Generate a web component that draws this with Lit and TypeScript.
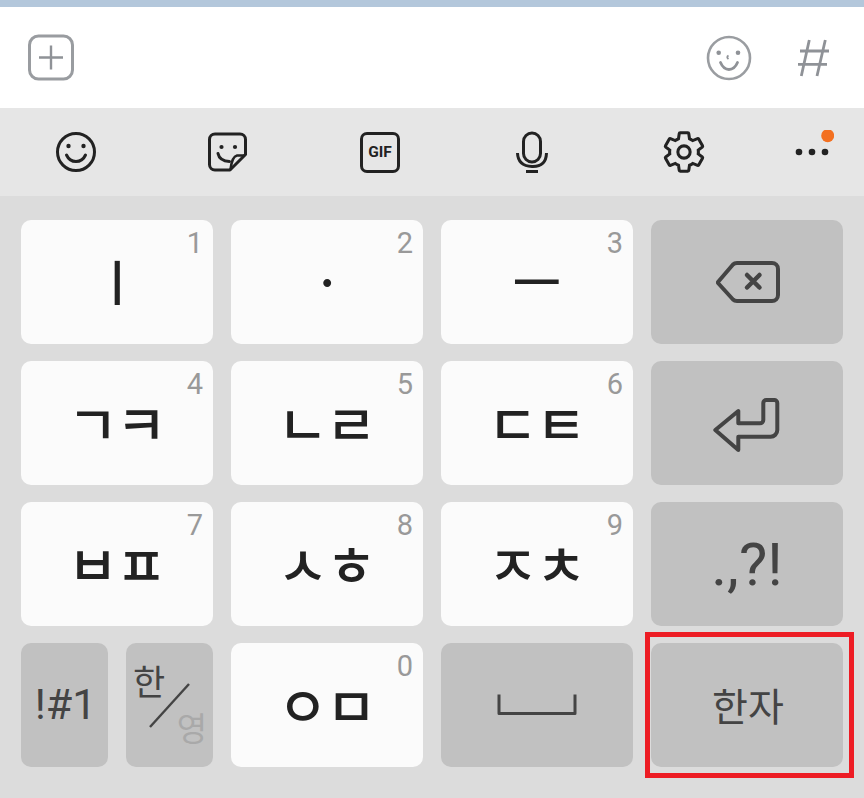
import { LitElement, html, css } from "lit";
import { customElement } from "lit/decorators.js";

const charKeys: Record<string, [string, string]> = {
  a: ["ㅣ", "1"],
  b: ["ㆍ", "2"],
  c: ["ㅡ", "3"],
  d: ["ㄱㅋ", "4"],
  e: ["ㄴㄹ", "5"],
  f: ["ㄷㅌ", "6"],
  g: ["ㅂㅍ", "7"],
  h: ["ㅅㅎ", "8"],
  i: ["ㅈㅊ", "9"],
  j: ["ㅇㅁ", "0"],
};

@customElement("app-root")
export class AppRoot extends LitElement {
  static styles = css`
    :host {
      display: block;
      width: 864px;
      height: 798px;
      position: relative;
      overflow: hidden;
      background: #dcdcdc;
      font-family: "Noto Sans CJK KR", Roboto, sans-serif;
    }
    svg { display: block; fill: none; }
    .band { height: 7px; background: #b3c7db; }
    .input {
      height: 101px;
      background: #fff;
      display: flex;
      align-items: center;
      padding: 0 33px 0 26px;
      box-sizing: border-box;
    }
    .spacer { flex: 1; }
    .input-right { display: flex; align-items: center; gap: 45px; }
    .toolbar {
      height: 88px;
      background: #e6e6e6;
      display: flex;
      align-items: center;
    }
    .slot {
      width: 152px;
      display: flex;
      justify-content: center;
      align-items: center;
    }
    .slot.last { flex: 1; width: auto; }
    .gif-box {
      width: 34px;
      height: 35px;
      border: 3px solid #222;
      border-radius: 7px;
      display: flex;
      align-items: center;
      justify-content: center;
      font: 700 15.5px Roboto, sans-serif;
      color: #222;
    }
    .keys {
      display: grid;
      grid-template-columns: repeat(4, 192px);
      grid-auto-rows: 124px;
      column-gap: 18px;
      row-gap: 17px;
      padding: 24px 0 0 21px;
    }
    .split { display: grid; grid-template-columns: 87px 87px; column-gap: 18px; }
    .key {
      position: relative;
      border-radius: 10px;
      display: flex;
      align-items: center;
      justify-content: center;
    }
    .light { background: #fbfbfb; color: #222; }
    .dark { background: #c1c1c1; color: #444; }
    .num {
      position: absolute;
      top: 6px;
      right: 10px;
      font: 400 29px/34px Roboto, sans-serif;
      color: #999;
    }
    .glyph {
      font-size: 55px;
      line-height: 60px;
      font-weight: 500;
      letter-spacing: -2px;
      transform: translate(-1px, -2px);
    }
    .glyph.single { font-size: 53px; letter-spacing: 0; transform: translateY(-2px); }
    .glyph.thin { font-size: 49px; letter-spacing: 0; transform: translateY(-2px); }
    .latin { font-family: Roboto, sans-serif; }
    .sym { font-size: 43px; transform: translate(1px, -1px); }
    .punct { font-size: 60px; transform: translateY(0); }
    .hanja { font-size: 39px; line-height: 50px; transform: translate(1px, -1px); }
    .lang {
      display: grid;
      padding: 0 6px 0 6px;
      align-content: center;
      justify-content: stretch;
    }
    .lang span { line-height: 46px; }
    .ko { font-size: 35px; justify-self: start; transform: translate(1px, -2px); }
    .en { font-size: 33px; justify-self: end; color: #a9a9a9; transform: translateY(-1px); }
    .slash { position: absolute; left: 0; top: 0; }
    .mark {
      position: absolute;
      left: 645px;
      top: 632px;
      width: 209px;
      height: 146px;
      box-sizing: border-box;
      border: 5px solid #ed1c24;
    }
  `;

  private key(id: string) {
    const [label, num] = charKeys[id];
    const extra = id === "a" ? "thin" : label.length === 1 ? "single" : "";
    return html`<div class="key light">
      <span class="glyph ${extra}">${label}</span><span class="num">${num}</span>
    </div>`;
  }

  private plusIcon() {
    return html`<svg width="50" height="50" viewBox="0 0 50 50">
      <rect x="3.5" y="3" width="43" height="43" rx="9" stroke="#999ca0" stroke-width="3"></rect>
      <path d="M25 12.500v24M13 24.500h24" stroke="#8f9297" stroke-width="2.4"></path>
    </svg>`;
  }

  private faceIcon() {
    return html`<svg width="46" height="46" viewBox="0 0 46 46">
      <circle cx="23" cy="23" r="21" stroke="#9a9da1" stroke-width="2.6"></circle>
      <circle cx="12.7" cy="17.7" r="2.3" fill="#8f9297"></circle>
      <circle cx="32" cy="17.7" r="2.3" fill="#8f9297"></circle>
      <path d="M22.5 20.5q-2.5 1.5 0 3.5" stroke="#8f9297" stroke-width="1.8"></path>
      <path d="M14.5 27.5q3 7 8.5 7t8.5-7" stroke="#8f9297" stroke-width="2.8" stroke-linecap="round"></path>
    </svg>`;
  }

  private hashIcon() {
    return html`<svg width="34" height="40" viewBox="0 0 34 40">
      <path d="M12.3 2L4.300 38M28.300 2L20 38M3 13H32M1 26.300H30" stroke="#8f9297" stroke-width="2.8"></path>
    </svg>`;
  }

  private smileIcon() {
    return html`<svg width="44" height="44" viewBox="0 0 44 44">
      <circle cx="22" cy="22" r="18.500" stroke="#222" stroke-width="3"></circle>
      <circle cx="14.500" cy="16" r="2.200" fill="#222"></circle>
      <circle cx="29.500" cy="16" r="2.200" fill="#222"></circle>
      <path d="M12.500 25q3 6.500 9.500 6.500t9.500-6.500" stroke="#222" stroke-width="3" stroke-linecap="round"></path>
    </svg>`;
  }

  private stickerIcon() {
    return html`<svg width="44" height="44" viewBox="0 0 44 44">
      <path d="M10 4h24a5.500 5.500 0 0 1 5.500 5.500V24.500L24 40H9a5.500 5.500 0 0 1-5.500-5.500V9.500A5.500 5.500 0 0 1 9 4z" stroke="#222" stroke-width="3" stroke-linejoin="round"></path>
      <path d="M39 25.500H31q-5 1-6.500 14" stroke="#222" stroke-width="2.600" stroke-linejoin="round"></path>
      <circle cx="15.500" cy="17" r="2.100" fill="#222"></circle>
      <circle cx="29" cy="17" r="2.100" fill="#222"></circle>
      <path d="M12 23.500q1.500 7.500 11.500 8" stroke="#222" stroke-width="3" stroke-linecap="round"></path>
    </svg>`;
  }

  private micIcon() {
    return html`<svg width="44" height="44" viewBox="0 0 44 44">
      <rect x="13.500" y="3" width="17" height="29" rx="8.500" stroke="#222" stroke-width="3"></rect>
      <path d="M7.500 23q.5 13 14.500 13.500T36.500 23M16 41.500h12" stroke="#222" stroke-width="3"></path>
    </svg>`;
  }

  private gearIcon() {
    return html`<svg width="46" height="46" viewBox="0 0 24 24">
      <path d="M19.430 12.980c.04-.32.07-.64.07-.98 0-.34-.03-.66-.07-.98l2.110-1.650c.19-.15.24-.42.12-.64l-2-3.460c-.09-.16-.26-.25-.44-.25-.06 0-.12.01-.17.03l-2.490 1c-.52-.4-1.080-.73-1.690-.98l-.38-2.650C14.460 2.180 14.250 2 14 2h-4c-.25 0-.46.18-.49.42l-.38 2.650c-.61.25-1.170.59-1.690.98l-2.490-1c-.06-.02-.12-.03-.18-.03-.17 0-.34.09-.43.25l-2 3.460c-.13.22-.07.49.12.64l2.110 1.650c-.04.32-.07.65-.07.98 0 .33.03.66.07.98l-2.110 1.650c-.19.15-.24.42-.12.64l2 3.460c.09.16.26.25.44.25.06 0 .12-.01.17-.03l2.490-1c.52.4 1.080.73 1.690.98l.38 2.650c.03.24.24.42.49.42h4c.25 0 .46-.18.49-.42l.38-2.650c.61-.25 1.170-.59 1.690-.98l2.490 1c.06.02.12.03.18.03.17 0 .34-.09.43-.25l2-3.460c.12-.22.07-.49-.12-.64l-2.110-1.650z" stroke="#222" stroke-width="1.600"></path>
      <circle cx="12" cy="12" r="3.200" stroke="#222" stroke-width="1.600"></circle>
    </svg>`;
  }

  private moreIcon() {
    return html`<svg width="44" height="44" viewBox="0 0 44 44">
      <circle cx="9" cy="22" r="3.300" fill="#222"></circle>
      <circle cx="22" cy="22" r="3.300" fill="#222"></circle>
      <circle cx="35" cy="22" r="3.300" fill="#222"></circle>
      <circle cx="37.700" cy="5.700" r="6.500" fill="#f37021"></circle>
    </svg>`;
  }

  private backIcon() {
    return html`<svg width="70" height="50" viewBox="0 0 70 50">
      <path d="M6 25 L21 7.500Q22.500 6 25 6H60a6 6 0 0 1 6 6V38a6 6 0 0 1-6 6H25Q22.500 44 21 42.500L6 26Z" stroke="#444" stroke-width="4" stroke-linejoin="round"></path>
      <path d="M35 18l12.500 12.500M47.500 18L35 30.500" stroke="#444" stroke-width="4.500" stroke-linecap="round"></path>
    </svg>`;
  }

  private enterIcon() {
    return html`<svg width="70" height="60" viewBox="0 0 70 60">
      <path d="M3.300 37L26.300 18V30.300H48a3.300 3.300 0 0 0 3.300-3.300V10a3 3 0 0 1 3-3H62.300a3 3 0 0 1 3 3V37a6.700 6.700 0 0 1-6.700 6.700H26.300V57Z" stroke="#444" stroke-width="4" stroke-linejoin="round"></path>
    </svg>`;
  }

  private spaceIcon() {
    return html`<svg width="82" height="24" viewBox="0 0 82 24">
      <path d="M3 1.500V20.500H79V1.500" stroke="#444" stroke-width="3" stroke-linejoin="round"></path>
    </svg>`;
  }

  render() {
    return html`
      <div class="band"></div>
      <div class="input">
        ${this.plusIcon()}
        <div class="spacer"></div>
        <div class="input-right">${this.faceIcon()} ${this.hashIcon()}</div>
      </div>
      <div class="toolbar">
        <div class="slot">${this.smileIcon()}</div>
        <div class="slot">${this.stickerIcon()}</div>
        <div class="slot"><div class="gif-box">GIF</div></div>
        <div class="slot">${this.micIcon()}</div>
        <div class="slot">${this.gearIcon()}</div>
        <div class="slot last">${this.moreIcon()}</div>
      </div>
      <div class="keys">
        ${this.key("a")}${this.key("b")}${this.key("c")}
        <div class="key dark">${this.backIcon()}</div>
        ${this.key("d")}${this.key("e")}${this.key("f")}
        <div class="key dark">${this.enterIcon()}</div>
        ${this.key("g")}${this.key("h")}${this.key("i")}
        <div class="key dark"><span class="latin punct">.,?!</span></div>
        <div class="split">
          <div class="key dark"><span class="latin sym">!#1</span></div>
          <div class="key dark lang">
            <span class="ko">한</span><span class="en">영</span>
            <svg class="slash" width="87" height="124" viewBox="0 0 87 124">
              <path d="M24 84L63 41" stroke="#444" stroke-width="2.400"></path>
            </svg>
          </div>
        </div>
        ${this.key("j")}
        <div class="key dark">${this.spaceIcon()}</div>
        <div class="key dark"><span class="hanja">한자</span></div>
      </div>
      <div class="mark"></div>
    `;
  }
}
